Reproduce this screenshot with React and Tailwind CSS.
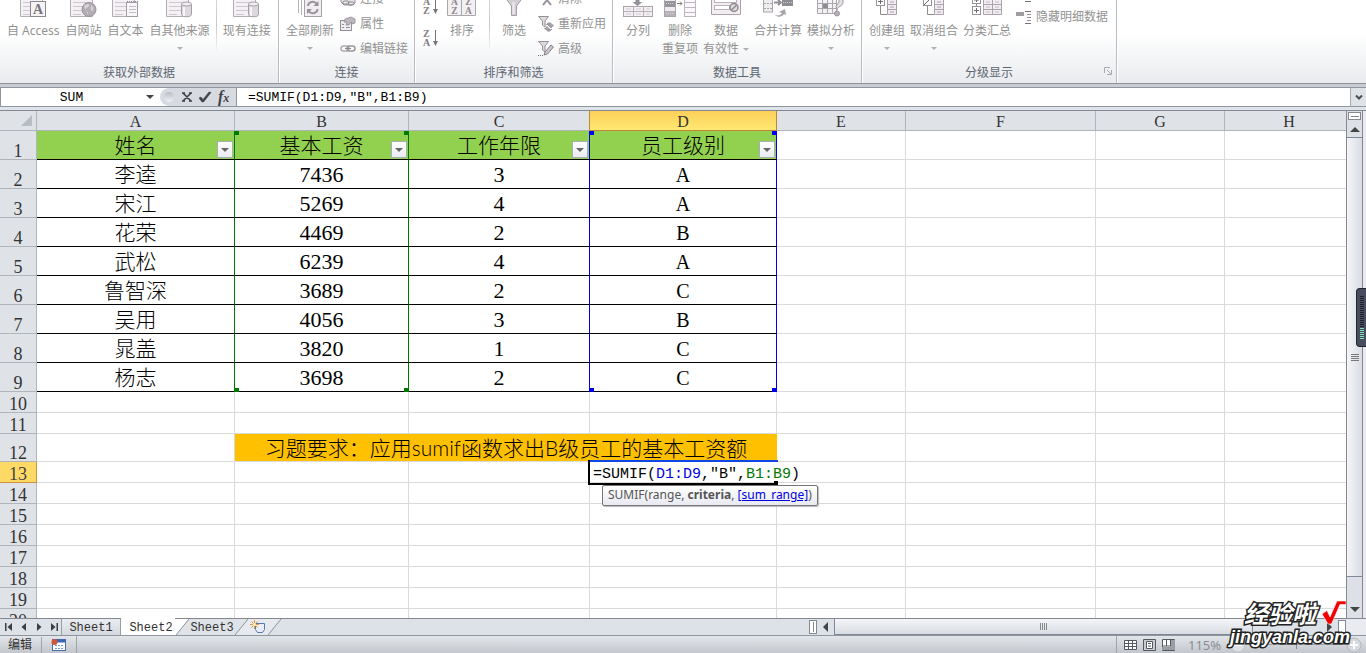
import React from "react";

const SIM = "font-['Liberation_Mono','Noto_Sans_CJK_SC',monospace]";

/* ---------- icons ---------- */

const Sheet = () => (
  <>
    <path d="M.5 -12V16.5H22.5V-12" fill="#f4f1f4" stroke="#b3aeb4" />
    <path d="M3 2.5h18M3 6.5h18M3 10.5h18M3 14.5h8" stroke="#cfc8cf" />
  </>
);

const Svg = ({ w = 30, h = 18, children }) => (
  <svg width={w} height={h} viewBox={`0 0 ${w} ${h}`} fill="none" className="shrink-0" aria-hidden="true">
    {children}
  </svg>
);

const AccessIcon = () => (
  <Svg w={27}>
    <Sheet />
    <rect x="10.5" y="1.5" width="15" height="15" fill="#f5f3f5" stroke="#8d898f" />
    <text x="18" y="14" textAnchor="middle" fontSize="14" fontWeight="700" fontFamily="Liberation Serif" fill="#77737a">A</text>
  </Svg>
);
const WebIcon = () => (
  <Svg w={27}>
    <Sheet />
    <circle cx="19" cy="9.500" r="7" fill="#b1adb3" stroke="#97939a" />
    <path d="M14 6c3-3 6-2 5 0s-4 2-3 4 3 2 2 5M21 5c2 1 3 3 2 5s-3 0-2-2z" fill="#d6d2d7" />
  </Svg>
);
const TextIcon = () => (
  <Svg w={27}>
    <Sheet />
    <rect x="14.5" y="2.5" width="11" height="14" fill="#f8f6f8" stroke="#a29da4" />
    <path d="M15 1.5h11" stroke="#8d898f" strokeDasharray="1 1" />
    <path d="M17 6.5h7M17 9.500h7M17 12.500h7" stroke="#c3bdc4" />
  </Svg>
);
const DbIcon = () => (
  <Svg w={27}>
    <Sheet />
    <path d="M15.500 4v10.500c0 3 10 3 10 0V4" fill="#dcd8dd" stroke="#a5a0a7" />
    <ellipse cx="20.500" cy="4" rx="5" ry="2" fill="#f1eef1" stroke="#a5a0a7" />
    <path d="M18 7v9" stroke="#f6f4f6" strokeWidth="2" />
  </Svg>
);
const RefreshIcon = () => (
  <Svg w={27}>
    <path d="M1.500-2V13M4.500-2V15" stroke="#b9b4ba" />
    <rect x="7.500" y="-4" width="17" height="20.500" fill="#f1edf1" stroke="#a7a2a8" />
    <path d="M11 6c0-4 6-6 9-2M20.500 9c0 4-6 6-9 2" stroke="#9a959c" strokeWidth="2" />
    <path d="M21.500 1v5h-5zM10 14V9h5z" fill="#949097" />
  </Svg>
);
const SortIcon = () => (
  <Svg w={30}>
    <path d="M.5-4V15.500H28.500V-4M14.500-4V15.500" fill="#f3f0f3" stroke="#aaa6ac" />
    <g fontFamily="Liberation Serif" fontWeight="700" fontSize="9.500" fill="#8b878d" textAnchor="middle">
      <text x="7.500" y="5">A</text><text x="21.500" y="5">Z</text>
      <text x="7.500" y="14">Z</text><text x="21.500" y="14">A</text>
    </g>
  </Svg>
);
const FunnelIcon = () => (
  <Svg w={20}>
    <path d="M1.500-2 7.500 6V15.500H12.500V6L18.500-2" fill="#d2ced3" stroke="#a19da3" />
    <path d="M9.500 2V14" stroke="#efecef" strokeWidth="2" />
  </Svg>
);
const SplitIcon = () => (
  <Svg w={30}>
    <path d="M12.500-3h4V2h3l-5 4-5-4h3z" fill="#949097" />
    <rect x=".5" y="6.500" width="29" height="10" fill="#f3eff3" stroke="#aaa5ab" />
    <path d="M.5 11.500h29M10.500 6v10M20.500 6v10" stroke="#b7b2b8" />
    <path d="M3 9h5M13 9h5M23 9h4M3 14h5M13 14h5M23 14h4" stroke="#d3ccd3" />
  </Svg>
);
const DedupeIcon = () => (
  <Svg w={32}>
    <rect x=".5" y="-2" width="11" height="18.500" fill="#eeebee" stroke="#aaa5ab" />
    <rect x="1" y="1" width="10" height="6" fill="#97939a" /><rect x="1" y="11" width="10" height="5" fill="#b5b1b7" />
    <path d="M2 3.500h8M2 13.500h8" stroke="#d9d5da" strokeDasharray="1 1" />
    <path d="M13 3.500h5M16 1.500l2 2-2 2" stroke="#7f7b81" />
    <rect x="20.500" y="-2" width="11" height="18.500" fill="#faf8fa" stroke="#bcb6bc" />
    <path d="M20 2.500h11M20 7.500h11M20 12.500h11" stroke="#bcb6bc" />
  </Svg>
);
const ValidIcon = () => (
  <Svg w={30}>
    <path d="M.5-2V14.500H29.500V-2" fill="#f2eef2" stroke="#a9a4aa" />
    <rect x="3.500" y="-1" width="22" height="3.500" fill="#fff" stroke="#b8b3b9" />
    <rect x="3.500" y="5.500" width="15" height="4" fill="#fff" stroke="#b8b3b9" />
    <circle cx="23" cy="7.500" r="4" fill="#e0dce0" stroke="#8d898f" strokeWidth="1.500" />
    <path d="m20.500 10 5-5" stroke="#8d898f" strokeWidth="1.500" />
  </Svg>
);
const MergeIcon = () => (
  <Svg w={32}>
    <rect x="1.500" y="-2" width="9" height="14" fill="#f0edf0" stroke="#aaa5ab" />
    <path d="M2 3.500h8M2 8.500h8" stroke="#aaa5ab" strokeDasharray="2 1" />
    <path d="M12 2.500h7M16 0l3 2.500-3 2.500" stroke="#949097" strokeWidth="2" />
    <rect x="20" y="-2" width="11" height="8" fill="#8f8b92" /><path d="M21 2.500h9" stroke="#c9c5ca" strokeDasharray="1 1" />
    <path d="M13 15c4 1 6 0 7-2l-3-1 6-3 1 6-2-1c-2 3-6 4-9 1z" fill="#a7a2a8" />
  </Svg>
);
const WhatIfIcon = () => (
  <Svg w={30}>
    <path d="M1.500-2V13.500H20.500V-2M6.500 0v13M11.500 0v13M16.500 0v13M1.500 3.500h19M1.500 8.500h19" fill="#f5f2f5" stroke="#aca7ad" />
    <rect x="7" y="4" width="5" height="4" fill="#8f8b92" />
    <path d="M21 10c0-4 6-3 6-8V-2h-4v4l-3 4z" fill="#e3dfe3" stroke="#a19da3" />
    <circle cx="21" cy="13.500" r="2.500" fill="#b5b0b6" stroke="#99959b" />
  </Svg>
);
const GroupIcon = ({ kind }) => (
  <Svg w={24}>
    <path d="M5.500 5V14.500H12" stroke="#8d898f" />
    <rect x="1.500" y="-3" width="8" height="8.500" fill="#fff" stroke="#96929a" />
    {kind === "plus" ? <path d="M3 1.500h5M5.500-1v5" stroke="#6e6a70" /> : <path d="m1.500 5.500 8-8" stroke="#6e6a70" />}
    <path d="M12.500-3V14.500H21.500V-3M12 4.500h10M12 9.500h10" fill="#f3edf3" stroke="#a9a4aa" />
    <path d="M15 2h4M15 7h4M15 12h4" stroke="#aaa5ab" />
  </Svg>
);
const SubtotalIcon = () => (
  <Svg w={32}>
    <path d="M5.500 3v4" stroke="#8d898f" />
    <rect x="1.500" y="-5" width="8" height="8.500" fill="#fff" stroke="#96929a" />
    <rect x="1.500" y="6.500" width="8" height="8" fill="#fff" stroke="#96929a" />
    <path d="M3 10.500h5M5.500 8v5M3 0h5M5.500-2v4" stroke="#6e6a70" />
    <path d="M12.500-3V14.500H30.500V-3M12 4.500h18M12 9.500h18M21.500-3V14" fill="#f3edf3" stroke="#a9a4aa" />
    <path d="M15 2h4M15 7h4M15 12h4M24 2h4M24 7h4M24 12h4" stroke="#c3bdc4" />
  </Svg>
);
const SortSmall = ({ a, b }) => (
  <Svg w={16} h={20}>
    <g fontFamily="Liberation Serif" fontSize="10" fontWeight="700" fill="#7f7b81">
      <text x="0" y="9">{a}</text><text x="0" y="18">{b}</text>
    </g>
    <path d="M12.500 2V15" stroke="#77737a" /><path d="M10 13h5L12.500 18z" fill="#77737a" />
  </Svg>
);
const LinkIcon = () => (
  <Svg w={16} h={16}>
    <rect x="1" y="5" width="8" height="5" rx="2.500" stroke="#b0acb2" strokeWidth="1.500" />
    <rect x="7" y="5" width="8" height="5" rx="2.500" stroke="#9b979d" strokeWidth="1.500" />
    <path d="M5 7.500h6" stroke="#8b878d" />
  </Svg>
);
const ConnIcon = () => (
  <Svg w={16} h={16}>
    <path d="M1 0v11l3 3h8l3-2V6" fill="#e8e5e8" stroke="#949097" />
    <rect x="3" y="10" width="6" height="3" rx="1.500" stroke="#8b878d" />
    <rect x="8" y="11" width="6" height="3" rx="1.500" stroke="#8b878d" />
  </Svg>
);
const PropIcon = () => (
  <Svg w={16} h={16}>
    <rect x=".5" y="4.500" width="11" height="10" fill="#efecef" stroke="#949097" />
    <path d="M2 8.500h2M2 11.500h2M6 11.500h4" stroke="#949097" />
    <path d="M4 6c0-3 2-4 4-4l3-1 4 2v4l-3 1-1-2-2 3H6l1-3z" fill="#bdb9be" stroke="#8f8b92" strokeWidth=".8" />
  </Svg>
);
const ReapplyIcon = () => (
  <Svg w={16} h={16}>
    <path d="M.5.500h10L7 5v6L4.500 9V5z" fill="#dedade" stroke="#949097" />
    <path d="M8 9c2-3 5-3 6 0h1.500L13 12l-3-3h1.500M14 13c-2 3-5 3-6 0H6.500L9 10.500l3 3h-1.500" fill="#aaa5ab" stroke="#868289" strokeWidth=".7" />
  </Svg>
);
const AdvIcon = () => (
  <Svg w={16} h={16}>
    <path d="M.5.500h10L7 5v6L4.500 9V5z" fill="#dedade" stroke="#949097" />
    <path d="m6 14 1-3 6-7 2.500 2-6 7z" fill="#c9c5ca" stroke="#868289" />
    <path d="M0 14.500h6" stroke="#77737a" strokeDasharray="1 1" />
  </Svg>
);
const ClearIcon = () => (
  <Svg w={16} h={16}>
    <path d="m5 5 4 4 4-4M5 14l4-5 4 5" stroke="#949097" strokeWidth="2" />
  </Svg>
);
const DetailIcon = () => (
  <svg width="16" height="16" viewBox="0 0 16 16" fill="none" className="shrink-0 overflow-visible" aria-hidden="true">
    <rect x="0" y="3" width="8" height="4" fill="#a09ca2" />
    <path d="M9 2.500h6M9 14.500h6M9-7.500h6" stroke="#77737a" />
    <path d="M11 5.500h4M11 8.500h4M11 11.500h4" stroke="#949097" />
  </svg>
);
const Tri = ({ cls = "border-t-[#b0b0b0]" }) => (
  <span className={`inline-block h-0 w-0 border-x-[3px] border-t-[3px] border-x-transparent ${cls}`} />
);

/* ---------- ribbon ---------- */

const Big = ({ icon, label, sub, drop }) => (
  <button type="button" className="flex shrink-0 flex-col items-center whitespace-nowrap">
    <span className="flex h-[22px] w-full justify-center">{icon}</span>
    <span className="leading-[18px]">{label}</span>
    {sub && <span className="flex items-center gap-1 leading-[18px]">{sub}{drop && <Tri />}</span>}
    {!sub && drop && <span className="flex h-4 items-center"><Tri /></span>}
  </button>
);
const Small = ({ icon, label }) => (
  <button type="button" className="flex h-[25px] items-center gap-1 whitespace-nowrap">
    {icon}
    <span>{label}</span>
  </button>
);
const Sep = () => <span className="h-[50px] w-px shrink-0 bg-linear-to-b from-[#d5d7db] via-[#c4c8ce] to-[#f2f3f4]" />;
const Group = ({ title, cls, launcher, children }) => (
  <section aria-label={title} className={`relative flex shrink-0 flex-col border-r border-[#b9bdc4] shadow-[1px_0_0_#fff] ${cls}`}>
    <div className="flex h-[63px] items-start">{children}</div>
    <h2 className="text-center leading-5 text-[#5f6672]">{title}</h2>
    {launcher && (
      <button type="button" aria-label="分级显示设置" className="absolute right-1 bottom-2">
        <Svg w={9} h={9}><path d="M1.500 7V1.500H7M4 4l4 4M8.500 4v4.500H4" stroke="#a9adb3" /></Svg>
      </button>
    )}
  </section>
);

const Ribbon = () => (
  <div className="flex h-[84px] shrink-0 overflow-hidden border-b border-[#8b919b] bg-linear-to-b from-white from-40% to-[#e9ebee] font-['Noto_Sans','Noto_Sans_CJK_SC',sans-serif] text-xs text-[#929292]">
    <Group title="获取外部数据" cls="w-[279px]">
      <div className="flex gap-1.5 pl-[7px]">
        <Big icon={<AccessIcon />} label="自 Access" />
        <Big icon={<WebIcon />} label="自网站" />
        <Big icon={<TextIcon />} label="自文本" />
        <Big icon={<DbIcon />} label="自其他来源" drop />
        <Sep />
        <Big icon={<DbIcon />} label="现有连接" />
      </div>
    </Group>
    <Group title="连接" cls="w-[136px]">
      <div className="flex gap-1.5 pl-[7px]">
        <Big icon={<RefreshIcon />} label="全部刷新" drop />
        <div className="-mt-3.5 flex flex-col">
          <Small icon={<ConnIcon />} label="连接" />
          <Small icon={<PropIcon />} label="属性" />
          <Small icon={<LinkIcon />} label="编辑链接" />
        </div>
      </div>
    </Group>
    <Group title="排序和筛选" cls="w-[198px]">
      <div className="flex pl-2">
        <div className="-mt-1 flex flex-col gap-3">
          <button type="button" aria-label="升序"><SortSmall a="A" b="Z" /></button>
          <button type="button" aria-label="降序"><SortSmall a="Z" b="A" /></button>
        </div>
        <div className="ml-2 flex gap-3">
          <Big icon={<SortIcon />} label="排序" />
          <Sep />
          <Big icon={<FunnelIcon />} label="筛选" />
          <div className="-mt-3.5 flex flex-col">
            <Small icon={<ClearIcon />} label="清除" />
            <Small icon={<ReapplyIcon />} label="重新应用" />
            <Small icon={<AdvIcon />} label="高级" />
          </div>
        </div>
      </div>
    </Group>
    <Group title="数据工具" cls="w-[249px]">
      <div className="flex gap-[9px] pl-2.5">
        <Big icon={<SplitIcon />} label="分列" />
        <div className="flex gap-[5px]">
          <Big icon={<DedupeIcon />} label="删除" sub="重复项" />
          <Big icon={<ValidIcon />} label="数据" sub="有效性" drop />
          <Big icon={<MergeIcon />} label="合并计算" />
          <Big icon={<WhatIfIcon />} label="模拟分析" drop />
        </div>
      </div>
    </Group>
    <Group title="分级显示" cls="w-[255px]" launcher>
      <div className="flex gap-[5px] pl-[7px]">
        <Big icon={<GroupIcon kind="plus" />} label="创建组" drop />
        <Big icon={<GroupIcon kind="slash" />} label="取消组合" drop />
        <Big icon={<SubtotalIcon />} label="分类汇总" />
        <div className="mt-1 flex flex-col">
          <Small icon={<DetailIcon />} label="隐藏明细数据" />
        </div>
      </div>
    </Group>
  </div>
);

/* ---------- formula bar ---------- */

const FormulaBar = () => (
  <div className="shrink-0 border-b border-[#85898f] bg-[#dfe3ea]">
    <div className="h-[3px] bg-[#c9ccd2]" />
    <div className="flex h-5 border-y border-[#8f969f] bg-white text-[13px] text-black">
      <div className="flex w-[158px] shrink-0 items-center border-l border-[#8f969f]">
        <input aria-label="名称框" defaultValue="SUM" className={`w-[141px] bg-transparent pt-0.5 text-center outline-none ${SIM}`} />
        <button type="button" aria-label="名称列表" className="flex w-4 justify-center">
          <span className="h-0 w-0 border-x-4 border-t-4 border-x-transparent border-t-[#444]" />
        </button>
      </div>
      <div className="ml-0.5 flex w-[77px] shrink-0 items-center gap-1 rounded-l-full border-r border-[#8f969f] bg-[#d7dbe1] pl-1">
        <span className="h-2.5 w-2.5 rounded-full bg-linear-to-b from-[#b9bdc3] to-[#f1f3f5]" />
        <button type="button" aria-label="取消" className="ml-0.5">
          <Svg w={14} h={14}><path d="m3 3 8 8M11 3l-8 8M2 3h3M9 3h3M2 11h3M9 11h3" stroke="#3f4349" strokeWidth="1.700" /></Svg>
        </button>
        <button type="button" aria-label="输入">
          <Svg w={14} h={14}><path d="m1 8 2-1 2 2.500L11 2l2 .5L5.500 12H4z" fill="#3f4349" stroke="#3f4349" strokeWidth=".6" /></Svg>
        </button>
        <button type="button" aria-label="插入函数" className="ml-0.5 font-['Liberation_Serif',serif] text-base leading-4 font-bold text-[#3f4349] italic">
          f<span className="text-xs">x</span>
        </button>
      </div>
      <input aria-label="编辑栏" defaultValue={'=SUMIF(D1:D9,"B",B1:B9)'} className={`min-w-0 flex-1 bg-white pt-0.5 pl-[11px] outline-none ${SIM}`} />
      <button type="button" aria-label="展开编辑栏" className="flex w-4 items-center justify-center border-l border-[#a5abb3] bg-[#dfe3e8]">
        <Svg w={8} h={7}><path d="m1 1.500 3 3 3-3" stroke="#4a4e54" strokeWidth="2" /></Svg>
      </button>
    </div>
    <div className="h-[3px]" />
  </div>
);

/* ---------- grid ---------- */

const rows = [
  ["李逵", "7436", "3", "A"],
  ["宋江", "5269", "4", "A"],
  ["花荣", "4469", "2", "B"],
  ["武松", "6239", "4", "A"],
  ["鲁智深", "3689", "2", "C"],
  ["吴用", "4056", "3", "B"],
  ["晁盖", "3820", "1", "C"],
  ["杨志", "3698", "2", "C"],
];
const edge = ["border-r-[#007a00]", "border-r-[#007a00]", "border-r-[#0000f0]", "border-r-[#0000f0]"];
const size = ["text-[21px]", "text-[22px]", "text-[22px]", "text-xl"];
const CELL = "border-r border-b border-[#d8dadc] p-0";
const blanks = (n) => Array.from({ length: n }, (_, i) => <td key={i} className={CELL} />);

const RowHead = ({ n, active }) => (
  <th
    scope="row"
    className={`border-r border-b p-0 text-center align-bottom text-lg leading-4 font-normal ${
      active ? "border-[#c9923a] bg-[#ffd965] text-[#444]" : "border-[#b0b5bb] bg-[#dfe3e8] text-[#333]"
    }`}
  >
    {n}
  </th>
);
const Handles = ({ pos, color }) => (
  <>
    <span className={`absolute -left-px h-1 w-[5px] ${pos} ${color}`} />
    <span className={`absolute -right-px z-10 h-1 w-[5px] ${pos} ${color}`} />
  </>
);
const FilterBtn = ({ name }) => (
  <button type="button" aria-label={`筛选 ${name}`} className="absolute right-px bottom-px flex h-[17px] w-4 items-center justify-center border border-[#a9adb5] bg-linear-to-b from-white to-[#e9ebf2]">
    <span className="h-0 w-0 border-x-4 border-t-4 border-x-transparent border-t-[#666]" />
  </button>
);

const Grid = () => (
  <table className="w-[calc(100%+8px)] table-fixed border-separate border-spacing-0 font-['Liberation_Serif','Noto_Sans_CJK_SC',serif] text-black">
    <colgroup>
      <col className="w-[37px]" />
      <col className="w-[198px]" />
      <col className="w-[174px]" />
      <col className="w-[181px]" />
      <col className="w-[187px]" />
      <col className="w-[129px]" />
      <col className="w-[190px]" />
      <col className="w-[129px]" />
      <col />
    </colgroup>
    <thead>
      <tr className="h-5">
        <th className="border-r border-b border-[#b0b5bb] bg-[#dfe3e8] p-0 align-bottom">
          <button type="button" aria-label="全选" className="mr-1 mb-1 ml-auto block h-0 w-0 border-b-[11px] border-l-[11px] border-b-[#b7bcc2] border-l-transparent" />
        </th>
        {"ABCDEFGH".split("").map((c) => (
          <th
            key={c}
            scope="col"
            className={`border-r border-b p-0 pt-[3px] text-base leading-4 font-normal text-[#333] ${
              c === "D" ? "border-[#c08a35] bg-linear-to-b from-[#fcd05a] to-[#fee873]" : c === "C" ? "border-[#b0b5bb] border-r-[#c08a35] bg-[#dfe3e8]" : "border-[#b0b5bb] bg-[#dfe3e8]"
            }`}
          >
            {c}
          </th>
        ))}
      </tr>
    </thead>
    <tbody>
      <tr className="h-[29px]">
        <RowHead n={1} />
        {["姓名", "基本工资", "工作年限", "员工级别"].map((t, i) => (
          <td key={t} className={`relative border-r border-b border-b-black bg-[#92d050] p-0 pt-0.5 text-center text-[21px] leading-[26px] font-light ${edge[i]}`}>
            {t}
            <FilterBtn name={t} />
            {i === 1 && <Handles pos="top-0" color="bg-[#007a00]" />}
            {i === 3 && <Handles pos="top-0" color="bg-[#0000f0]" />}
          </td>
        ))}
        {blanks(4)}
      </tr>
      {rows.map((r, k) => (
        <tr key={r[0]} className="h-[29px]">
          <RowHead n={k + 2} />
          {r.map((t, i) => (
            <td key={i} className={`relative border-r border-b border-b-black p-0 pt-0.5 text-center leading-[26px] font-light ${size[i]} ${edge[i]}`}>
              {t}
              {k === 7 && i === 1 && <Handles pos="-bottom-px" color="bg-[#007a00]" />}
              {k === 7 && i === 3 && <Handles pos="-bottom-px" color="bg-[#0000f0]" />}
            </td>
          ))}
          {blanks(4)}
        </tr>
      ))}
      {[10, 11].map((n) => (
        <tr key={n} className="h-[21px]"><RowHead n={n} />{blanks(8)}</tr>
      ))}
      <tr className="h-7">
        <RowHead n={12} />
        {blanks(1)}
        <td colSpan={3} className="border-b border-[#d8dadc] bg-[#ffc000] p-0 pt-px text-center font-['Lato','Noto_Sans_CJK_SC',sans-serif] text-[21px] leading-[26px] font-light">
          习题要求：应用sumif函数求出B级员工的基本工资额
        </td>
        {blanks(4)}
      </tr>
      <tr className="h-[21px]">
        <RowHead n={13} active />
        {blanks(3)}
        <td className={`${CELL} relative`}>
          <div role="textbox" aria-label="D13" className={`absolute top-0 left-0 z-10 h-5 w-[209px] bg-white pl-[3px] text-left text-[15px] leading-[25px] whitespace-nowrap ${SIM}`}>
            =SUMIF(<span className="text-[#0000e0]">D1:D9</span>,"B",<span className="text-[#007a00]">B1:B9</span>)
          </div>
          <span className="absolute -top-0.5 -left-0.5 z-20 h-[25px] w-[190px] border-b-2 border-l-2 border-black" />
          <span className="absolute -top-0.5 left-0 z-20 h-0.5 w-[188px] bg-[#0f46e6]" />
          <span className="absolute -right-0.5 -bottom-[3px] z-20 h-1 w-1 bg-black" />
          <div role="tooltip" className="absolute top-[23px] left-3 z-30 h-[21px] rounded-xs border border-[#767676] bg-linear-to-b from-white to-[#e9eaf2] px-[5px] font-['Noto_Sans',sans-serif] text-xs leading-[18px] whitespace-nowrap text-[#555] shadow-[1px_1px_1px_#bbb]">
            SUMIF(range, <b>criteria</b>, <a href="#sum_range" className="text-[#0000e0] underline">[sum_range]</a>)
          </div>
        </td>
        {blanks(4)}
      </tr>
      {[14, 15, 16, 17, 18, 19, 20].map((n) => (
        <tr key={n} className="h-[21px]"><RowHead n={n} />{blanks(8)}</tr>
      ))}
    </tbody>
  </table>
);

const VScroll = () => (
  <div className="relative flex w-5 shrink-0 bg-[#e9ebf0]">
    <div className="flex w-[17px] flex-col border-x border-[#85898f] bg-[#dde1e7]">
      <div className="m-px flex h-2 items-center justify-center border border-[#85898f] bg-white"><span className="h-px w-2 bg-[#85898f]" /></div>
      <button type="button" aria-label="向上滚动" className="flex h-4 items-center justify-center">
        <span className="h-0 w-0 border-x-[5px] border-b-[5px] border-x-transparent border-b-[#444]" />
      </button>
      <div className="flex grow-[18] flex-col items-center justify-center gap-px border-y border-[#7f8997] bg-linear-to-r from-[#f4f5f8] to-[#d9dde3]">
        <span className="h-px w-2 bg-[#777]" /><span className="h-px w-2 bg-[#777]" /><span className="h-px w-2 bg-[#777]" /><span className="h-px w-2 bg-[#777]" />
      </div>
      <div className="grow" />
      <button type="button" aria-label="向下滚动" className="flex h-[17px] items-center justify-center">
        <span className="h-0 w-0 border-x-[5px] border-t-[5px] border-x-transparent border-t-[#444]" />
      </button>
    </div>
  </div>
);

/* ---------- tabs and status ---------- */

const Slant = ({ left, right }) => (
  <svg width="15" height="16" viewBox="0 0 15 16" className="shrink-0" aria-hidden="true">
    <path d="M0 0H14L1 16H0z" fill={left} />
    <path d="M14 0H15V16H1z" fill={right} />
    <path d="M14 0 1 16" stroke="#8f959d" fill="none" />
  </svg>
);
const Nav = ({ d, label }) => (
  <button type="button" aria-label={label}><Svg w={10} h={10}><path d={d} fill="#3a3e45" /></Svg></button>
);

const TabBar = () => (
  <div className="flex h-[17px] shrink-0 border-t border-[#85898f] bg-[#dde1e8]">
    <div className="flex min-w-0 grow-[172] basis-0 items-stretch">
      <div className="flex w-[62px] shrink-0 items-center gap-[5px] border-r border-[#9a9fa7] pl-1">
        <Nav label="第一个" d="M1 1h1.500v8H1zM8 1v8L3.500 5z" />
        <Nav label="上一个" d="M7 1v8L2.500 5z" />
        <Nav label="下一个" d="M3 1v8L7.500 5z" />
        <Nav label="最后一个" d="M2 1v8L6.500 5zM7.500 1H9v8H7.500z" />
      </div>
      <nav className={`flex text-xs leading-[18px] text-[#333] ${SIM}`}>
        <button type="button" className="w-[59px] border-r border-[#9a9fa7] bg-linear-to-b from-[#e9ecf0] to-[#d5d9df]">Sheet1</button>
        <button type="button" className="-mt-px w-[54px] bg-white pt-px pl-1.5">Sheet2</button>
        <Slant left="#fff" right="#dfe3e8" />
        <button type="button" className="w-11 bg-[#dfe3e8]">Sheet3</button>
        <Slant left="#dfe3e8" right="#e6e9ee" />
        <button type="button" aria-label="插入工作表" className="flex w-[18px] items-center justify-center bg-[#e6e9ee]">
          <Svg w={16} h={14}>
            <path d="M5.500 3.500h9v6l-2 3h-5l-2-3z" fill="#e8eefa" stroke="#5a78b0" />
            <path d="M4.500 0v9M0 4.500h9M1.500 1.500l6 6M7.500 1.500l-6 6" stroke="#e09a3c" /><circle cx="4.500" cy="4.500" r="1.500" fill="#fff3c4" />
          </Svg>
        </button>
        <Slant left="#e6e9ee" right="#dde1e8" />
      </nav>
    </div>
    <div className="flex min-w-0 grow-[114] basis-0 items-stretch">
      <div className="my-px w-2 border border-[#85898f] bg-white p-px"><div className="mx-auto h-full w-px bg-[#85898f]" /></div>
      <button type="button" aria-label="向左滚动" className="flex w-[17px] items-center justify-center">
        <span className="h-0 w-0 border-y-[5px] border-r-[5px] border-y-transparent border-r-[#444]" />
      </button>
      <div className="flex grow-[6] items-center justify-center gap-px border border-t-0 border-[#7f8997] bg-linear-to-b from-[#f4f5f8] to-[#d9dde3]">
        {[0, 1, 2, 3].map((i) => <span key={i} className="h-[7px] w-px bg-[#888]" />)}
      </div>
      <div className="grow" />
      <button type="button" aria-label="向右滚动" className="flex w-[17px] items-center justify-center">
        <span className="h-0 w-0 border-y-[5px] border-l-[5px] border-y-transparent border-l-[#444]" />
      </button>
      <div className="my-px w-2 border border-[#85898f] bg-white" />
    </div>
    <div className="w-5 shrink-0 bg-[#e9ebf0]" />
  </div>
);

const StatusBar = () => (
  <footer className="flex h-[18px] shrink-0 items-center border-t border-[#8f959d] bg-linear-to-b from-[#e2e5e9] to-[#c3c7cd] font-['Noto_Sans','Noto_Sans_CJK_SC',sans-serif] text-xs leading-4 text-[#333]">
    <span className="w-[42px] border-r border-[#a0a5ac] pl-2">编辑</span>
    <button type="button" aria-label="录制宏" className="flex h-full w-[35px] items-center justify-center border-r border-[#a0a5ac]">
      <Svg w={16} h={14}>
        <rect x="1.500" y="1.500" width="13" height="11" fill="#fff" stroke="#4a6ea8" /><path d="M1 3h14" stroke="#3c66b0" strokeWidth="3" />
        <path d="M4 7.500h9M4 10.500h9" stroke="#6f94d0" strokeDasharray="2 1" /><circle cx="3.500" cy="4" r="3" fill="#d0573c" />
      </Svg>
    </button>
    <div className="flex-1" />
    <div className="flex h-full items-center gap-1 border-l border-[#a0a5ac] pl-1.5 text-[#8a8d92]">
      <button type="button" aria-label="普通"><Svg w={15} h={12}><path d="M1.500 1.500h12v9h-12zM5.500 1v10M9.500 1v10M1 4.500h13M1 7.500h13" fill="#fff" stroke="#555a61" /></Svg></button>
      <button type="button" aria-label="页面布局"><Svg w={15} h={12}><path d="M1.500 .5h12v11h-12z" fill="#c9ccd1" stroke="#555a61" /><path d="M4.500 2.500h6v7h-6zM6 4.500h3M6 7h3" fill="#fff" stroke="#555a61" /></Svg></button>
      <button type="button" aria-label="分页预览"><Svg w={15} h={12}><path d="M1.500 .5h12v11h-12z" fill="#fff" stroke="#555a61" /><path d="M5.500 1v6M9.500 1v6M1 7h9" stroke="#555a61" /><path d="M10 1h4v10H1V8h9z" fill="#9a9ea5" /></Svg></button>
      <span className="ml-2 w-[38px] text-[13px]">115%</span>
      <button type="button" aria-label="缩小"><Svg w={16} h={16}><circle cx="8" cy="8" r="7" fill="#dfe1e5" stroke="#c0c3c8" /><path d="M4 8h8" stroke="#fff" strokeWidth="2" /></Svg></button>
      <span className="flex w-[92px] items-center"><span className="h-px flex-1 bg-[#9a9ea5]" /><span className="h-2 w-px bg-[#85898f]" /><span className="h-px flex-1 bg-[#9a9ea5]" /></span>
      <button type="button" aria-label="放大" className="mr-1"><Svg w={16} h={16}><circle cx="8" cy="8" r="7" fill="#d5d8dc" stroke="#b4b7bc" /><path d="M4 8h8M8 4v8" stroke="#fff" strokeWidth="2" /></Svg></button>
    </div>
  </footer>
);

const Watermark = () => (
  <div className="pointer-events-none absolute right-4 bottom-1.5 z-40 flex flex-col items-end font-bold text-white">
    <div className="flex items-start gap-1.5 pr-1">
      <span className="font-['Noto_Sans_CJK_SC',sans-serif] text-2xl leading-6 italic [-webkit-text-stroke:3px_#222] [paint-order:stroke_fill]">经验啦</span>
      <svg width="24" height="26" viewBox="0 0 24 26" aria-hidden="true">
        <path d="M0 13 5 9.500 8 16 15 0H24V3.500H18L9.500 23H6z" fill="#f00000" stroke="#fff" strokeWidth=".6" />
      </svg>
    </div>
    <span className="font-['Liberation_Sans',sans-serif] text-lg leading-5 italic [-webkit-text-stroke:3px_#222] [paint-order:stroke_fill]">jingyanla.com</span>
  </div>
);

export default function App() {
  return (
    <main className="relative flex h-screen flex-col overflow-hidden bg-white">
      <Ribbon />
      <FormulaBar />
      <div className="flex min-h-0 flex-1">
        <div className="min-w-0 flex-1 overflow-hidden"><Grid /></div>
        <VScroll />
      </div>
      <TabBar />
      <StatusBar />
      <div className="absolute top-[288px] right-0 z-30 flex h-[59px] w-2.5 flex-col items-center justify-center gap-px rounded-l border border-r-0 border-[#23262f] bg-[#474d5e]">
        {Array.from({ length: 22 }, (_, i) => (
          <span key={i} className={`h-px w-1 ${i > 15 ? "bg-[#7fe0b8]" : "bg-[#20232c]"}`} />
        ))}
      </div>
      <Watermark />
    </main>
  );
}
